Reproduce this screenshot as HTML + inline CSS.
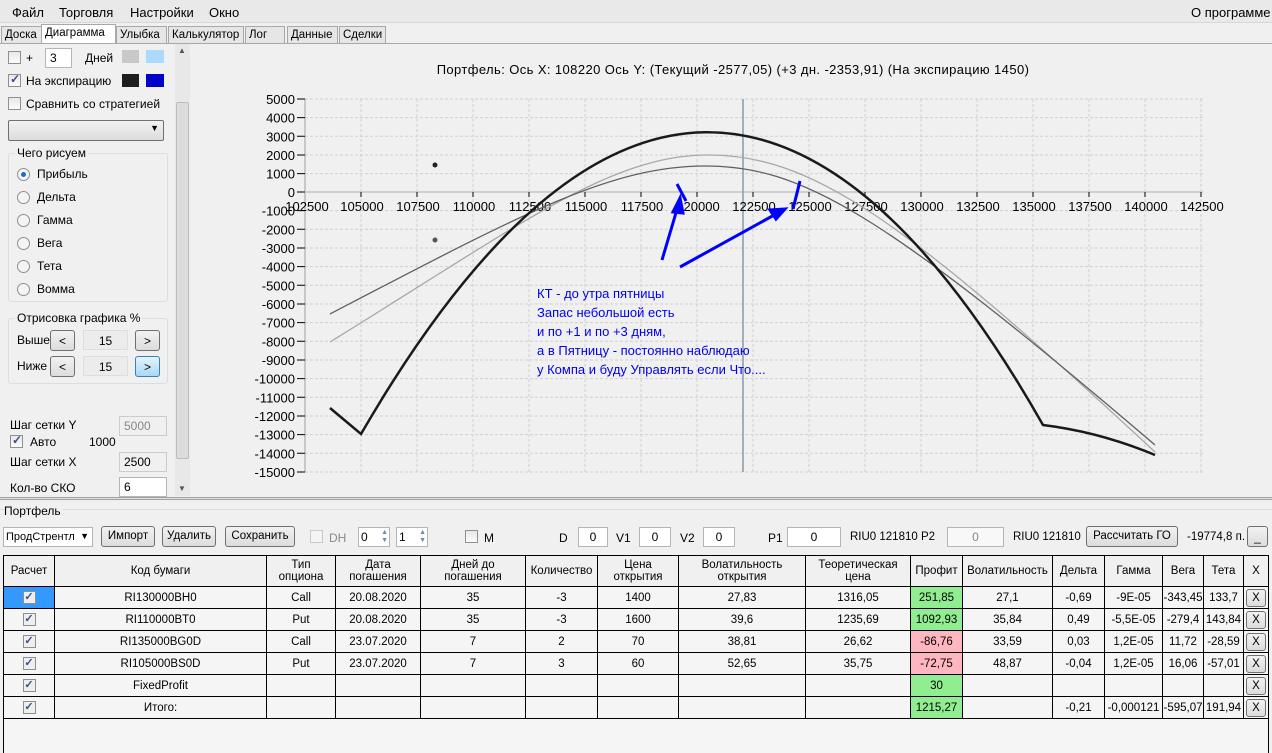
<!DOCTYPE html>
<html><head><meta charset="utf-8">
<style>
*{box-sizing:border-box;margin:0;padding:0}
body{width:1272px;height:752px;background:#f0f0f0;font-family:"Liberation Sans",sans-serif;font-size:12px;color:#000;position:relative;overflow:hidden}
.a{position:absolute;white-space:nowrap}
.menu{left:0;top:0;width:1272px;height:23px;background:#e9e9e9;border-bottom:1px solid #d8d8d8}
.menu span{position:absolute;top:5px;font-size:13px}
.tab{position:absolute;top:26px;height:17px;border:1px solid #a8a8a8;border-bottom:none;background:#e6e6e6;font-size:11.5px;padding:2px 3px 0;overflow:hidden}
.chk{position:absolute;width:13px;height:13px;border:1px solid #8e8f8f;background:linear-gradient(#e8e8e8,#fbfbfb)}
.chk.on::after{content:"✓";position:absolute;left:1px;top:-3px;font-size:12px;color:#3a4f8a;font-weight:bold}
.rad{position:absolute;width:13px;height:13px;border:1px solid #8e8f8f;border-radius:50%;background:#f4f4f4}
.rad.on::after{content:"";position:absolute;left:3px;top:3px;width:5px;height:5px;border-radius:50%;background:#1c6cc4}
.inp{position:absolute;height:20px;border:1px solid #b5b5b5;background:#fff;font-size:12px;padding:2px 4px}
.btn{position:absolute;height:21px;border:1px solid #707070;border-radius:3px;background:linear-gradient(#f2f2f2,#dcdcdc);font-size:12px;text-align:center;padding-top:3px}
.grp{position:absolute;border:1px solid #d5dfe5;border-radius:3px}
.grp b{position:absolute;top:-8px;left:6px;background:#f0f0f0;font-weight:normal;padding:0 2px}
.tb{font-size:11.5px}
table{position:absolute;left:3px;top:555px;border-collapse:collapse;font-size:11.5px;table-layout:fixed;width:1265px}
td{border:1px solid #000;text-align:center;height:22px;padding:0;background:#f5f5f5;overflow:hidden;white-space:nowrap}
tr.h td{height:31px;background:#f0f0f0;line-height:12px}
.g{background:#90ee90!important}.p{background:#ffb6c1!important}
.x{display:block;margin:0 auto;width:20px;height:18px;border:1px solid #707070;border-radius:3px;background:linear-gradient(#f2f2f2,#dcdcdc);line-height:16px}
td .cb{display:inline-block;width:13px;height:13px;border:1px solid #8e8f8f;background:#eee;color:#3a4f8a;font-size:11px;line-height:11px;font-weight:bold}
</style></head><body>
<div class="a menu"><span style="left:12px">Файл</span><span style="left:59px">Торговля</span><span style="left:130px">Настройки</span><span style="left:209px">Окно</span><span style="left:1191px">О программе</span></div>
<div class="tab" style="left:1px;width:41px">Доска</div>
<div class="tab" style="left:41px;top:24px;height:20px;width:75px;background:#fff">Диаграмма</div>
<div class="tab" style="left:116px;width:51px">Улыбка</div>
<div class="tab" style="left:168px;width:76px">Калькулятор</div>
<div class="tab" style="left:245px;width:40px">Лог</div>
<div class="tab" style="left:287px;width:51px">Данные</div>
<div class="tab" style="left:339px;width:47px">Сделки</div>
<div class="a" style="left:0;top:43px;width:1272px;height:1px;background:#a8a8a8"></div>

<!-- left panel -->
<div class="chk" style="left:8px;top:51px"></div><div class="a" style="left:26px;top:51px">+</div>
<div class="inp" style="left:45px;top:48px;width:27px">3</div><div class="a" style="left:85px;top:51px">Дней</div>
<div class="a" style="left:122px;top:50px;width:17px;height:13px;background:#c8c8c8"></div>
<div class="a" style="left:146px;top:50px;width:18px;height:13px;background:#aadbff"></div>
<div class="chk on" style="left:8px;top:74px"></div><div class="a" style="left:26px;top:74px">На экспирацию</div>
<div class="a" style="left:122px;top:74px;width:17px;height:13px;background:#1e1e1e"></div>
<div class="a" style="left:146px;top:74px;width:18px;height:13px;background:#0000c8"></div>
<div class="chk" style="left:8px;top:97px"></div><div class="a" style="left:26px;top:97px">Сравнить со стратегией</div>
<div class="btn" style="left:8px;top:120px;width:156px;border-radius:2px"><span style="position:absolute;right:4px;top:2px;font-size:9px">▼</span></div>
<div class="grp" style="left:8px;top:153px;width:160px;height:149px"><b>Чего рисуем</b></div>
<div class="rad on" style="left:17px;top:168px"></div><div class="a" style="left:37px;top:167px">Прибыль</div>
<div class="rad" style="left:17px;top:191px"></div><div class="a" style="left:37px;top:190px">Дельта</div>
<div class="rad" style="left:17px;top:214px"></div><div class="a" style="left:37px;top:213px">Гамма</div>
<div class="rad" style="left:17px;top:237px"></div><div class="a" style="left:37px;top:236px">Вега</div>
<div class="rad" style="left:17px;top:260px"></div><div class="a" style="left:37px;top:259px">Тета</div>
<div class="rad" style="left:17px;top:283px"></div><div class="a" style="left:37px;top:282px">Вомма</div>
<div class="grp" style="left:8px;top:318px;width:160px;height:66px"><b>Отрисовка графика %</b></div>
<div class="a" style="left:17px;top:333px">Выше</div>
<div class="btn" style="left:50px;top:330px;width:25px">&lt;</div>
<div class="a" style="left:83px;top:330px;width:45px;height:20px;background:#ececec;border:1px solid #ddd;text-align:center;padding-top:3px">15</div>
<div class="btn" style="left:135px;top:330px;width:25px">&gt;</div>
<div class="a" style="left:17px;top:359px">Ниже</div>
<div class="btn" style="left:50px;top:356px;width:25px">&lt;</div>
<div class="a" style="left:83px;top:356px;width:45px;height:20px;background:#ececec;border:1px solid #ddd;text-align:center;padding-top:3px">15</div>
<div class="btn" style="left:135px;top:356px;width:25px;border-color:#3c7fb1;background:linear-gradient(#e5f4fc,#a8d8f5)">&gt;</div>
<div class="a" style="left:10px;top:418px">Шаг сетки Y</div>
<div class="inp" style="left:119px;top:416px;width:48px;background:#f0f0f0;color:#888;border-color:#ccc">5000</div>
<div class="chk on" style="left:10px;top:435px"></div><div class="a" style="left:30px;top:435px">Авто</div><div class="a" style="left:89px;top:435px">1000</div>
<div class="a" style="left:10px;top:455px">Шаг сетки X</div>
<div class="inp" style="left:119px;top:452px;width:48px;background:#f0f0f0;border-color:#ccc">2500</div>
<div class="a" style="left:10px;top:481px">Кол-во СКО</div>
<div class="inp" style="left:119px;top:477px;width:48px">6</div>
<div class="a" style="left:175px;top:44px;width:15px;height:452px;background:#e8e8e8"></div>
<div class="a" style="left:176px;top:102px;width:13px;height:357px;background:#dcdcdc;border:1px solid #bcbcbc;border-radius:2px"></div>
<div class="a" style="left:178px;top:46px;font-size:8px;color:#555">▲</div>
<div class="a" style="left:178px;top:484px;font-size:8px;color:#555">▼</div>

<!-- chart -->
<svg class="a" style="left:0;top:0" width="1272" height="500" font-family="Liberation Sans" font-size="12">
<g stroke="#d0d0d0" stroke-dasharray="3,2" stroke-width="1">
<path d="M361 99V472M417 99V472M473 99V472M529 99V472M585 99V472M641 99V472M697 99V472M753 99V472M809 99V472M865 99V472M921 99V472M977 99V472M1033 99V472M1089 99V472M1145 99V472M1201 99V472"/>
<path d="M305 99H1203M305 117.6H1203M305 136.3H1203M305 155H1203M305 173.6H1203M305 210.6H1203M305 229.3H1203M305 248H1203M305 266.6H1203M305 285.3H1203M305 304H1203M305 322.6H1203M305 341.3H1203M305 360H1203M305 378.6H1203M305 397.3H1203M305 416H1203M305 434.6H1203M305 453.3H1203M305 472H1203"/>
</g>
<line x1="305" y1="99" x2="305" y2="472" stroke="#c8c8c8" stroke-width="2"/>
<line x1="305" y1="192" x2="1203" y2="192" stroke="#cfcfcf" stroke-width="2"/>
<line x1="743" y1="99" x2="743" y2="472" stroke="#a4aebb" stroke-width="2"/>
<g stroke="#000"><path d="M297 99h8M297 117.6h8M297 136.3h8M297 155h8M297 173.6h8M297 192h8M297 210.6h8M297 229.3h8M297 248h8M297 266.6h8M297 285.3h8M297 304h8M297 322.6h8M297 341.3h8M297 360h8M297 378.6h8M297 397.3h8M297 416h8M297 434.6h8M297 453.3h8M297 472h8"/>
<path d="M361 192v5M417 192v5M473 192v5M529 192v5M585 192v5M641 192v5M697 192v5M753 192v5M809 192v5M865 192v5M921 192v5M977 192v5M1033 192v5M1089 192v5M1145 192v5M1201 192v5"/></g>
<g text-anchor="end" font-size="13">
<text x="295" y="104">5000</text><text x="295" y="122.6">4000</text><text x="295" y="141.3">3000</text><text x="295" y="160">2000</text><text x="295" y="178.6">1000</text><text x="295" y="197">0</text><text x="295" y="215.6">-1000</text><text x="295" y="234.3">-2000</text><text x="295" y="253">-3000</text><text x="295" y="271.6">-4000</text><text x="295" y="290.3">-5000</text><text x="295" y="309">-6000</text><text x="295" y="327.6">-7000</text><text x="295" y="346.3">-8000</text><text x="295" y="365">-9000</text><text x="295" y="383.6">-10000</text><text x="295" y="402.3">-11000</text><text x="295" y="421">-12000</text><text x="295" y="439.6">-13000</text><text x="295" y="458.3">-14000</text><text x="295" y="477">-15000</text></g>
<g text-anchor="middle" font-size="13"><text x="307" y="211">102500</text><text x="362" y="211">105000</text><text x="418" y="211">107500</text><text x="474" y="211">110000</text><text x="530" y="211">112500</text><text x="586" y="211">115000</text><text x="642" y="211">117500</text><text x="698" y="211">120000</text><text x="754" y="211">122500</text><text x="810" y="211">125000</text><text x="866" y="211">127500</text><text x="922" y="211">130000</text><text x="978" y="211">132500</text><text x="1034" y="211">135000</text><text x="1090" y="211">137500</text><text x="1146" y="211">140000</text><text x="1202" y="211">142500</text></g>
<path d="M330 342C520 225 610 155 708 155C810 155 900 215 1155 452" fill="none" stroke="#a8a8a8" stroke-width="1.3"/>
<path d="M330 314C520 215 610 166 705 166C800 166 880 210 1155 445" fill="none" stroke="#606060" stroke-width="1.3"/>
<path d="M330 408L361 434Q708 -165 1043 425Q1100 432 1155 455" fill="none" stroke="#1a1a1a" stroke-width="2.5"/>
<circle cx="435" cy="165" r="2.5" fill="#222"/><circle cx="435" cy="240" r="2.5" fill="#555"/>
<g stroke="#0000ff" stroke-width="3" fill="#0000ff">
<path d="M662 260L678 206" fill="none"/><path d="M680 198L673 212L683 213Z"/>
<path d="M677 184L686 201" fill="none"/>
<path d="M680 267L776 214" fill="none"/><path d="M785 209L770 210L776 219Z"/>
<path d="M800 181L793 209" fill="none"/>
</g>
<g fill="#0000ee" font-size="13"><text x="537" y="298">КТ - до утра пятницы</text><text x="537" y="317">Запас небольшой есть</text><text x="537" y="336">и по +1 и по +3 дням,</text><text x="537" y="355">а в Пятницу - постоянно наблюдаю</text><text x="537" y="374">у Компа и буду Управлять если Что....</text></g>
<text x="733" y="74" text-anchor="middle" font-size="13" letter-spacing="0.4">Портфель: Ось X: 108220 Ось Y: (Текущий -2577,05) (+3 дн. -2353,91) (На экспирацию 1450)</text>
</svg>

<!-- splitter / portfolio -->
<div class="a" style="left:0;top:497px;width:1272px;height:3px;border-top:1px solid #a0a0a0;border-bottom:1px solid #a0a0a0;background:#e0e0e0"></div>
<div class="a" style="left:0;top:509px;width:1272px;height:1px;background:#dcdcdc"></div>
<div class="a" style="left:4px;top:504px;background:#f0f0f0;padding-right:2px">Портфель</div>
<div class="inp" style="left:3px;top:527px;width:90px;height:20px;padding:3px 2px;font-size:11px;overflow:hidden">ПродСтрентл<span style="position:absolute;right:3px;top:3px;font-size:9px;background:#fff">▼</span></div>
<div class="btn tb" style="left:101px;top:526px;width:54px">Импорт</div>
<div class="btn tb" style="left:162px;top:526px;width:54px">Удалить</div>
<div class="btn tb" style="left:225px;top:526px;width:70px">Сохранить</div>
<div class="chk" style="left:310px;top:530px;border-color:#c8c8c8;background:#f4f4f4"></div><div class="a" style="left:329px;top:531px;color:#888">DH</div>
<div class="inp" style="left:358px;top:527px;width:32px;padding:2px 2px">0<span style="position:absolute;right:1px;top:1px;font-size:7px;color:#6a8ab0;line-height:8px">▲<br>▼</span></div>
<div class="inp" style="left:396px;top:527px;width:32px;padding:2px 2px">1<span style="position:absolute;right:1px;top:1px;font-size:7px;color:#6a8ab0;line-height:8px">▲<br>▼</span></div>
<div class="chk" style="left:465px;top:530px"></div><div class="a" style="left:484px;top:531px">M</div>
<div class="a" style="left:559px;top:531px">D</div><div class="inp" style="left:578px;top:527px;width:30px;text-align:center">0</div>
<div class="a" style="left:616px;top:531px">V1</div><div class="inp" style="left:639px;top:527px;width:32px;text-align:center">0</div>
<div class="a" style="left:680px;top:531px">V2</div><div class="inp" style="left:703px;top:527px;width:32px;text-align:center">0</div>
<div class="a" style="left:768px;top:531px">P1</div><div class="inp" style="left:787px;top:527px;width:54px;text-align:center">0</div>
<div class="a tb" style="left:850px;top:531px">RIU0 121810</div><div class="a tb" style="left:921px;top:531px">P2</div>
<div class="inp" style="left:947px;top:527px;width:57px;text-align:center;color:#888;background:#f8f8f8">0</div>
<div class="a tb" style="left:1013px;top:531px">RIU0 121810</div>
<div class="btn tb" style="left:1086px;top:526px;width:92px">Рассчитать ГО</div>
<div class="a tb" style="left:1187px;top:531px">-19774,8 п.</div>
<div class="btn" style="left:1247px;top:526px;width:21px">_</div>

<table>
<colgroup><col style="width:51px"><col style="width:212px"><col style="width:69px"><col style="width:85px"><col style="width:105px"><col style="width:72px"><col style="width:81px"><col style="width:127px"><col style="width:105px"><col style="width:52px"><col style="width:90px"><col style="width:52px"><col style="width:58px"><col style="width:41px"><col style="width:40px"><col style="width:25px"></colgroup>
<tr class="h"><td>Расчет</td><td>Код бумаги</td><td>Тип<br>опциона</td><td>Дата<br>погашения</td><td>Дней до<br>погашения</td><td>Количество</td><td>Цена<br>открытия</td><td>Волатильность<br>открытия</td><td>Теоретическая<br>цена</td><td>Профит</td><td>Волатильность</td><td>Дельта</td><td>Гамма</td><td>Вега</td><td>Тета</td><td>X</td></tr>
<tr><td style="background:#3399ff"><span class="cb">✓</span></td><td>RI130000BH0</td><td>Call</td><td>20.08.2020</td><td>35</td><td>-3</td><td>1400</td><td>27,83</td><td>1316,05</td><td class="g">251,85</td><td>27,1</td><td>-0,69</td><td>-9E-05</td><td>-343,45</td><td>133,7</td><td><span class="x">X</span></td></tr>
<tr><td><span class="cb">✓</span></td><td>RI110000BT0</td><td>Put</td><td>20.08.2020</td><td>35</td><td>-3</td><td>1600</td><td>39,6</td><td>1235,69</td><td class="g">1092,93</td><td>35,84</td><td>0,49</td><td>-5,5E-05</td><td>-279,4</td><td>143,84</td><td><span class="x">X</span></td></tr>
<tr><td><span class="cb">✓</span></td><td>RI135000BG0D</td><td>Call</td><td>23.07.2020</td><td>7</td><td>2</td><td>70</td><td>38,81</td><td>26,62</td><td class="p">-86,76</td><td>33,59</td><td>0,03</td><td>1,2E-05</td><td>11,72</td><td>-28,59</td><td><span class="x">X</span></td></tr>
<tr><td><span class="cb">✓</span></td><td>RI105000BS0D</td><td>Put</td><td>23.07.2020</td><td>7</td><td>3</td><td>60</td><td>52,65</td><td>35,75</td><td class="p">-72,75</td><td>48,87</td><td>-0,04</td><td>1,2E-05</td><td>16,06</td><td>-57,01</td><td><span class="x">X</span></td></tr>
<tr><td><span class="cb">✓</span></td><td>FixedProfit</td><td></td><td></td><td></td><td></td><td></td><td></td><td></td><td class="g">30</td><td></td><td></td><td></td><td></td><td></td><td><span class="x">X</span></td></tr>
<tr><td><span class="cb">✓</span></td><td>Итого:</td><td></td><td></td><td></td><td></td><td></td><td></td><td></td><td class="g">1215,27</td><td></td><td>-0,21</td><td>-0,000121</td><td>-595,07</td><td>191,94</td><td><span class="x">X</span></td></tr>
</table>
<div class="a" style="left:3px;top:719px;width:1266px;height:34px;border-left:1px solid #000;border-right:1px solid #000;background:#f5f5f5"></div>
</body></html>
